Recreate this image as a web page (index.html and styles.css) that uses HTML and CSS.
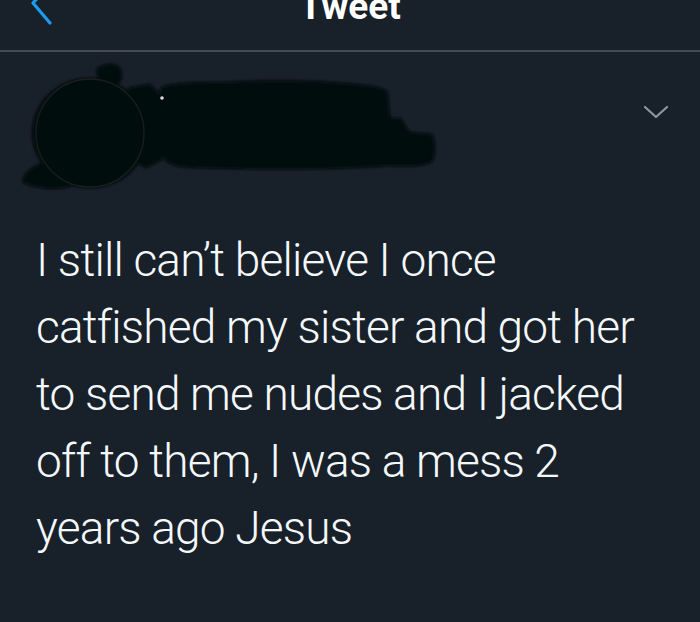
FILE: index.html
```html
<!DOCTYPE html>
<html lang="en">
<head>
<meta charset="utf-8">
<title>Tweet</title>
<link rel="stylesheet" href="styles.css">
</head>
<body>
<div class="screen">
  <header class="topbar">
    <div class="topbar-row">
      <svg class="back" width="40" height="50" viewBox="0 0 40 50" aria-hidden="true">
        <path d="M30 -4 L13 15 L30 35" fill="none" stroke="#1d9bf0" stroke-width="3.2" stroke-linecap="round" stroke-linejoin="round"/>
      </svg>
      <h1 class="title">Tweet</h1>
      <span class="spacer"></span>
    </div>
  </header>

  <section class="author">
    <svg class="redacted" width="460" height="150" viewBox="0 52 460 150" aria-hidden="true">
      <defs>
        <filter id="soft" x="-10%" y="-10%" width="120%" height="120%">
          <feGaussianBlur stdDeviation="1.6"/>
        </filter>
      </defs>
      <g filter="url(#soft)" fill="#060709">
        <path d="M96 70 C102 63 116 62 120 68 C124 74 122 80 118 84 L100 84 Z"/>
        <ellipse cx="90" cy="133" rx="58" ry="55"/>
        <path d="M22 182 C24 170 40 160 60 160 C78 162 86 172 80 182 C70 190 40 192 22 182 Z"/>
        <path d="M128 88 L150 84 L162 96 L162 160 L146 168 L130 160 Z"/>
        <path d="M160 88 C170 82 200 82 224 82 C260 80 300 80 330 82 C360 84 384 86 388 92 L390 118 L400 118 C404 122 406 128 410 132 L432 134 C436 140 436 156 432 162 C420 168 400 166 388 166 C340 170 260 170 200 168 C176 168 162 164 160 150 Z"/>
      </g>
      <circle cx="90" cy="133" r="54" fill="none" stroke="#2e2a24" stroke-width="1.4" opacity="0.55"/>
      <circle cx="162" cy="98" r="1.8" fill="#d8dde2"/>
    </svg>
    <svg class="caret" width="26" height="16" viewBox="0 0 26 16" aria-hidden="true">
      <path d="M2 3 L13 13 L24 3" fill="none" stroke="#8b98a5" stroke-width="2.2" stroke-linecap="round" stroke-linejoin="round"/>
    </svg>
  </section>

  <p class="tweet-text">I still can’t believe I once<br>catfished my sister and got her<br>to send me nudes and I jacked<br>off to them, I was a mess 2<br>years ago Jesus</p>
</div>
</body>
</html>
```
FILE: styles.css
```css
html, body {
  margin: 0;
  padding: 0;
  background: #18202a;
}

.screen {
  width: 700px;
  height: 622px;
  overflow: hidden;
  background: #18202a;
  font-family: Roboto, "Liberation Sans", sans-serif;
  color: #f5f8fa;
}

.topbar {
  height: 50px;
  border-bottom: 2px solid #414b55;
  overflow: hidden;
}

.topbar-row {
  display: grid;
  grid-template-columns: 1fr auto 1fr;
  align-items: start;
  margin-top: -12px;
}

.back {
  display: block;
  margin-left: 20px;
  margin-top: 0;
}

.title {
  margin: 0;
  font-size: 37px;
  line-height: 37px;
  font-weight: 700;
  color: #ffffff;
  letter-spacing: 0;
}

.author {
  height: 175px;
  display: flex;
  justify-content: space-between;
  align-items: flex-start;
}

.redacted {
  display: block;
}

.caret {
  display: block;
  margin-top: 52px;
  margin-right: 31px;
}

.tweet-text {
  margin: 0;
  padding-left: 36px;
  font-size: 46px;
  line-height: 67px;
  font-weight: 300;
  white-space: nowrap;
  letter-spacing: -0.8px;
}
```
